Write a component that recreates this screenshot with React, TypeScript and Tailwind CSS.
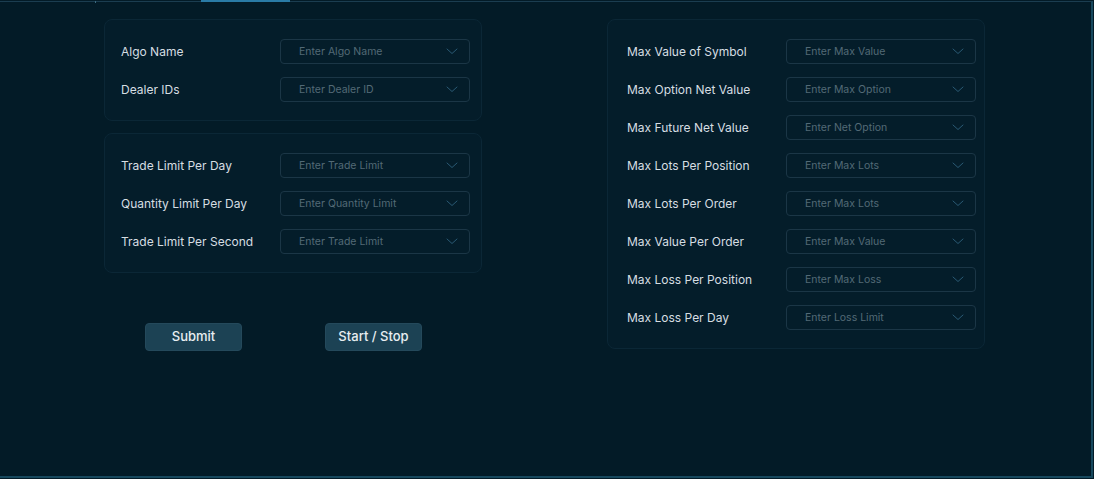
import React from "react";

const Chevron = () => (
  <svg width="12" height="7" viewBox="0 0 12 7" fill="none" className="shrink-0">
    <path d="M1 1L6 5.5L11 1" stroke="#2a5a74" strokeWidth="1" strokeLinecap="round" strokeLinejoin="round" />
  </svg>
);

const Field = ({ label, placeholder }: { label: string; placeholder: string }) => (
  <div className="flex items-center h-[25px]">
    <div className="w-[159px] text-[12px] text-[#d6dee2] whitespace-nowrap">{label}</div>
    <div className="flex items-center justify-between w-[190px] h-[25px] rounded-[4px] border border-[#1b3646] pl-[18px] pr-[11px]">
      <span className="text-[10.5px] text-[#536a76]">{placeholder}</span>
      <Chevron />
    </div>
  </div>
);

const Panel = ({ children, className = "" }: { children: React.ReactNode; className?: string }) => (
  <div className={`rounded-[8px] border border-[#0b2736] bg-[#041d2a] pt-[19px] pb-[18px] flex flex-col gap-[13px] ${className}`}>
    {children}
  </div>
);

export default function App() {
  return (
    <div className="w-[1094px] h-[479px] bg-[#031b27] overflow-hidden" style={{ fontFamily: "Inter, 'Noto Sans', sans-serif" }}>
      <div className="relative w-[1093px] h-[477px] border-t border-r-2 border-b-2 border-t-[#1b3d50] border-r-[#17485d] border-b-[#17485d] mt-[1px]">
        <div className="absolute -top-[2px] left-[201px] w-[89px] h-[2px] bg-[#2a7ba6]" />
        <div className="absolute -top-[1px] left-[95px] w-[1px] h-[2px] bg-[#3b6a80]" />
        <div className="flex pt-[17px]">
          <div className="ml-[104px] w-[378px] flex flex-col gap-[12px]">
            <Panel className="pl-[16px]">
              <Field label="Algo Name" placeholder="Enter Algo Name" />
              <Field label="Dealer IDs" placeholder="Enter Dealer ID" />
            </Panel>
            <Panel className="pl-[16px]">
              <Field label="Trade Limit Per Day" placeholder="Enter Trade Limit" />
              <Field label="Quantity Limit Per Day" placeholder="Enter Quantity Limit" />
              <Field label="Trade Limit Per Second" placeholder="Enter Trade Limit" />
            </Panel>
            <div className="flex gap-[83px] ml-[41px] mt-[38px]">
              <button className="w-[97px] h-[28px] rounded-[4px] bg-[#1c4254] border border-[#24495b] text-[13px] font-medium text-[#e8eef1]">Submit</button>
              <button className="w-[97px] h-[28px] rounded-[4px] bg-[#1c4254] border border-[#24495b] text-[13px] font-medium text-[#e8eef1]">Start / Stop</button>
            </div>
          </div>
          <div className="ml-[125px] w-[378px]">
            <Panel className="pl-[19px]">
              <Field label="Max Value of Symbol" placeholder="Enter Max Value" />
              <Field label="Max Option Net Value" placeholder="Enter Max Option" />
              <Field label="Max Future Net Value" placeholder="Enter Net Option" />
              <Field label="Max Lots Per Position" placeholder="Enter Max Lots" />
              <Field label="Max Lots Per Order" placeholder="Enter Max Lots" />
              <Field label="Max Value Per Order" placeholder="Enter Max Value" />
              <Field label="Max Loss Per Position" placeholder="Enter Max Loss" />
              <Field label="Max Loss Per Day" placeholder="Enter Loss Limit" />
            </Panel>
          </div>
        </div>
      </div>
    </div>
  );
}
